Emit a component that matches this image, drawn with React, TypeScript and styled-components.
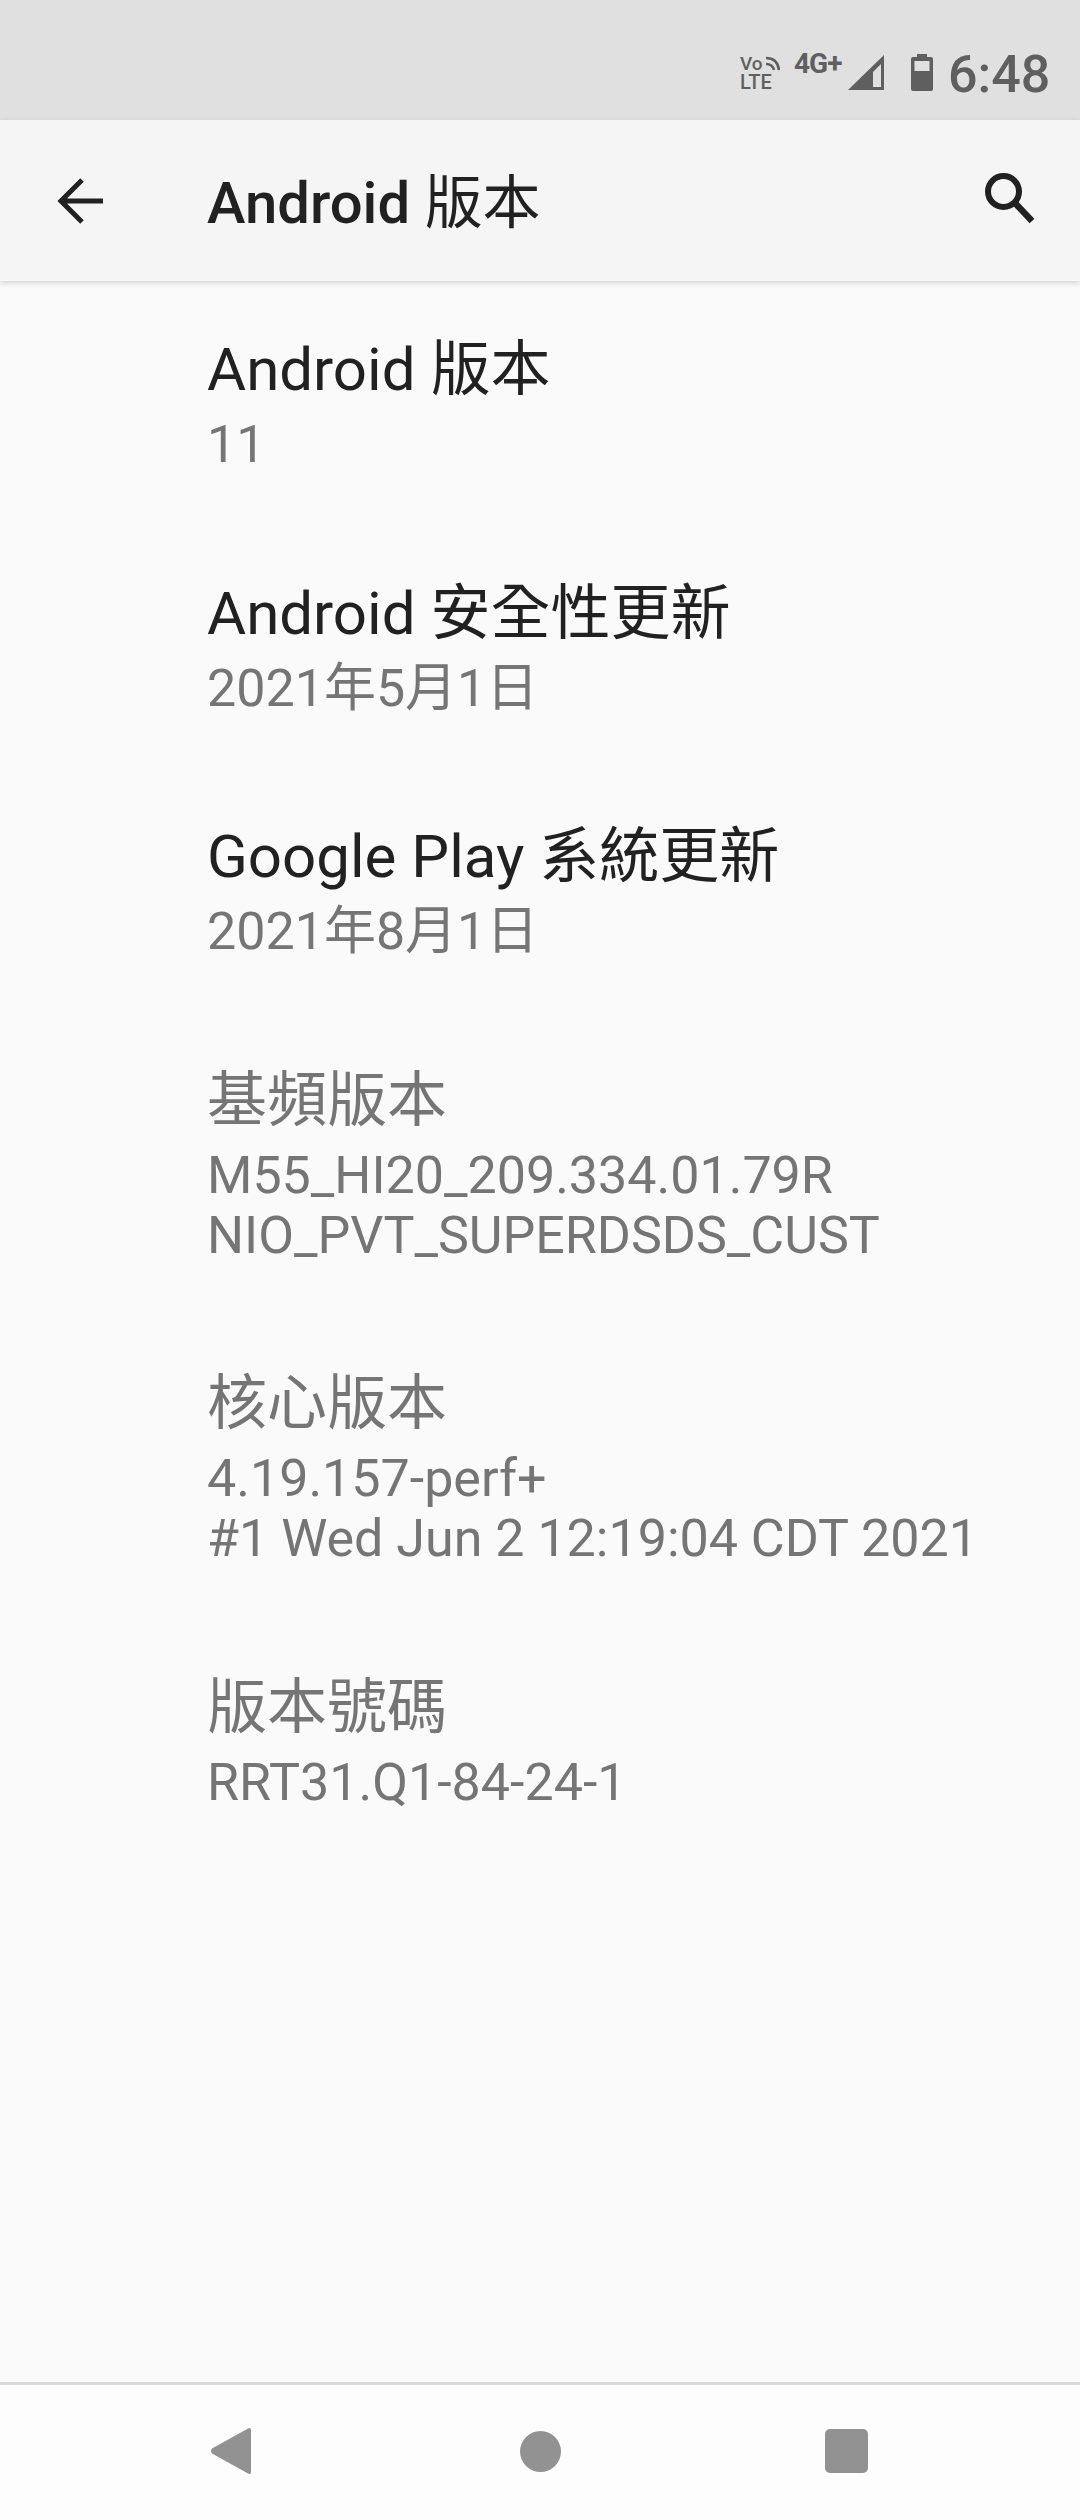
import styled, { createGlobalStyle } from 'styled-components';

const GlobalStyle = createGlobalStyle`
  html, body {
    margin: 0;
    padding: 0;
    background: #fafafa;
  }
`;

const FONT = `Roboto, "Noto Sans CJK TC", sans-serif`;

const items = [
  { title: 'Android 版本', lines: ['11'] },
  { title: 'Android 安全性更新', lines: ['2021年5月1日'] },
  { title: 'Google Play 系統更新', lines: ['2021年8月1日'] },
  { title: '基頻版本', lines: ['M55_HI20_209.334.01.79R', 'NIO_PVT_SUPERDSDS_CUST'], muted: true },
  { title: '核心版本', lines: ['4.19.157-perf+', '#1 Wed Jun 2 12:19:04 CDT 2021'], muted: true },
  { title: '版本號碼', lines: ['RRT31.Q1-84-24-1'], muted: true },
];

export default function App() {
  return (
    <StPhone>
      <GlobalStyle />
      <StStatusBar>
        <StVolte>
          <svg width="40" height="36" viewBox="0 0 40 36" fill="none">
            <path d="M26 8c4 0 7 2 8 6M26 2c7 0 12 4 13 12" stroke="#5f5f5f" strokeWidth="2.600" />
          </svg>
          <StVo>Vo</StVo>
          <StLte>LTE</StLte>
        </StVolte>
        <StNetwork>4G+</StNetwork>
        <StSignal width="37" height="37" viewBox="0 0 37 37">
          <path d="M0 36 L36 1 V36 Z M25 33 H33 V10 L25 18 Z" fill="#5f5f5f" fillRule="evenodd" />
        </StSignal>
        <StBattery width="22" height="37" viewBox="0 0 22 37">
          <path
            d="M6 0h10v3h4a2 2 0 0 1 2 2v30a2 2 0 0 1-2 2H2a2 2 0 0 1-2-2V5a2 2 0 0 1 2-2h4z M3.500 7v10h15V7z"
            fill="#5f5f5f"
            fillRule="evenodd"
          />
        </StBattery>
        <StClock>6:48</StClock>
      </StStatusBar>
      <StAppBar>
        <StIconSlot>
          <svg width="48" height="46" viewBox="0 0 48 46" fill="none">
            <path d="M46 23H5M25 2 4 23 25 44" stroke="#212121" strokeWidth="5" />
          </svg>
        </StIconSlot>
        <StAppTitle>
          Android <StAppTitleCjk>版本</StAppTitleCjk>
        </StAppTitle>
        <svg width="50" height="51" viewBox="0 0 50 51" fill="none">
          <circle cx="18.500" cy="18.500" r="15.500" stroke="#212121" strokeWidth="6" />
          <path d="M29 29 47 48" stroke="#212121" strokeWidth="6.500" />
        </svg>
      </StAppBar>
      <StList>
        {items.map((item) => (
          <StItem key={item.title}>
            <StItemTitle $muted={item.muted}>{item.title}</StItemTitle>
            {item.lines.map((line) => (
              <StSummary key={line}>{line}</StSummary>
            ))}
          </StItem>
        ))}
      </StList>
      <StNavBar>
        <svg width="42" height="48" viewBox="0 0 42 48">
          <path d="M38 1.500 Q41 0 41 3 V45 Q41 48 38 46.500 L2 26.500 Q0 24 2 21.500 Z" fill="#929292" />
        </svg>
        <StHomeDot />
        <StRecentSquare />
      </StNavBar>
    </StPhone>
  );
}

const StPhone = styled.div`
  display: flex;
  flex-direction: column;
  width: 1080px;
  height: 2520px;
  overflow: hidden;
  background: #fafafa;
  font-family: ${FONT};
`;

const StStatusBar = styled.div`
  display: flex;
  align-items: flex-start;
  flex-shrink: 0;
  height: 120px;
  box-sizing: border-box;
  padding: 54px 0 0 740px;
  background: #e0e0e0;
  color: #5f5f5f;
`;

const StVolte = styled.div`
  position: relative;
  width: 40px;
  height: 37px;

  svg {
    position: absolute;
    top: 2px;
    left: 0;
  }
`;

const StVo = styled.div`
  position: absolute;
  top: 0;
  left: 0;
  font-size: 19px;
  line-height: 19px;
  font-weight: 500;
`;

const StLte = styled.div`
  position: absolute;
  top: 19px;
  left: 0;
  font-size: 20px;
  line-height: 19px;
  font-weight: 500;
`;

const StNetwork = styled.div`
  margin: -3px 0 0 14px;
  width: 48px;
  font-size: 28px;
  line-height: 26px;
  font-weight: 700;
  letter-spacing: -1px;
  white-space: nowrap;
`;

const StSignal = styled.svg`
  margin-left: 6px;
`;

const StBattery = styled.svg`
  margin-left: 26px;
`;

const StClock = styled.div`
  margin: 0 0 0 15px;
  font-size: 52px;
  line-height: 42px;
  font-weight: 500;
`;

const StAppBar = styled.div`
  display: flex;
  align-items: center;
  flex-shrink: 0;
  height: 161px;
  padding-bottom: 4px;
  box-sizing: border-box;
  background: #f5f5f5;
  box-shadow: 0 2px 6px rgba(0, 0, 0, 0.16);
  position: relative;
  padding-right: 45px;
`;

const StIconSlot = styled.div`
  display: flex;
  width: 207px;
  margin-top: 4px;
  padding-left: 57px;
  box-sizing: border-box;
`;

const StAppTitle = styled.div`
  flex: 1;
  margin-bottom: 2px;
  color: #212121;
  font-size: 58px;
  font-weight: 500;
`;

const StAppTitleCjk = styled.span`
  font-weight: 400;
`;

const StList = styled.div`
  flex: 1;
  padding: 44px 0 0 207px;
`;

const StItem = styled.div`
  margin-bottom: 93.6px;
`;

const StItemTitle = styled.div<{ $muted?: boolean }>`
  color: ${({ $muted }) => ($muted ? '#757575' : '#212121')};
  font-size: 60px;
  line-height: 90px;
`;

const StSummary = styled.div`
  color: #757575;
  font-size: 52px;
  line-height: 60px;
`;

const StNavBar = styled.div`
  display: flex;
  align-items: center;
  flex-shrink: 0;
  justify-content: space-between;
  height: 138px;
  box-sizing: border-box;
  padding: 0 212px 3px 210px;
  border-top: 3px solid #dadada;
  background: #fdfdfd;
`;

const StHomeDot = styled.div`
  width: 41px;
  height: 41px;
  margin-left: 3px;
  border-radius: 50%;
  background: #929292;
`;

const StRecentSquare = styled.div`
  width: 43px;
  height: 44px;
  border-radius: 5px;
  background: #929292;
`;
